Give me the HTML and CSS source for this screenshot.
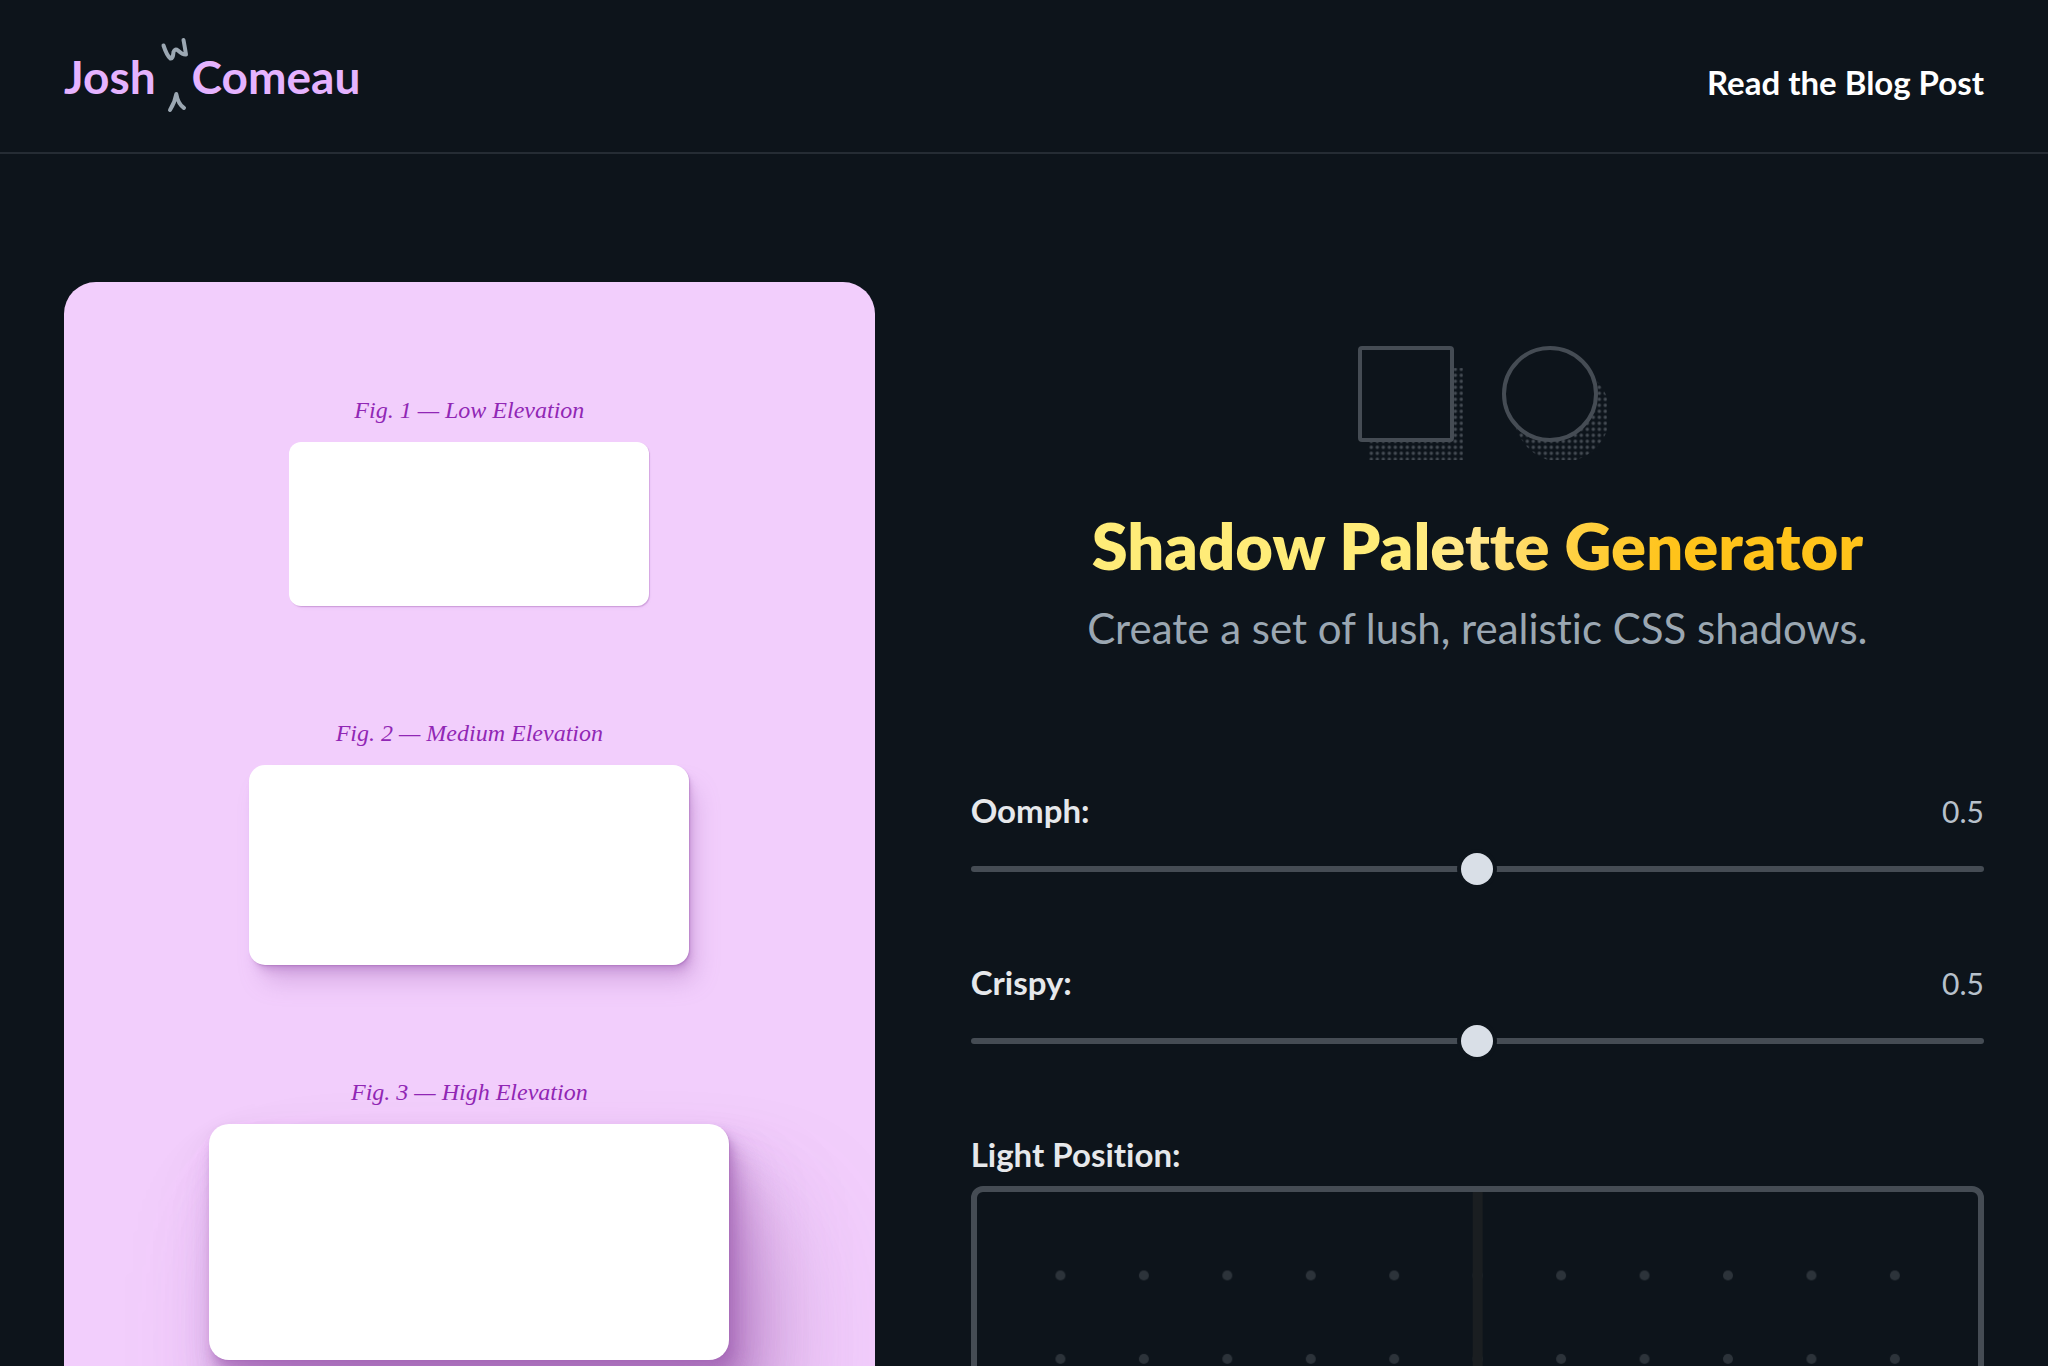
FILE: index.html
```html
<!DOCTYPE html>
<html lang="en">
<head>
<meta charset="utf-8">
<meta name="viewport" content="width=device-width, initial-scale=1">
<title>Shadow Palette Generator</title>
<link rel="stylesheet" href="styles.css">
</head>
<body>
<header class="site-header">
  <a class="logo" href="#" aria-label="Josh W Comeau">
    <span>Josh</span>
    <svg class="logo-initial" viewBox="0 0 36 78" aria-hidden="true">
      <path d="M7.500 9.500Q11 20 14.500 22.500Q17 23 17.500 16Q19 12 22 14.500Q27 19 30 18.500Q29 12 27.500 4"/>
      <path d="M14 74Q19 66 20.300 58Q22 68 28 72"/>
    </svg>
    <span>Comeau</span>
  </a>
  <a class="blog-link" href="#">Read the Blog Post</a>
</header>
<main class="layout">
  <section class="preview" aria-label="Shadow preview">
    <figure class="sample low">
      <figcaption>Fig. 1 — Low Elevation</figcaption>
      <div class="card"></div>
    </figure>
    <figure class="sample medium">
      <figcaption>Fig. 2 — Medium Elevation</figcaption>
      <div class="card"></div>
    </figure>
    <figure class="sample high">
      <figcaption>Fig. 3 — High Elevation</figcaption>
      <div class="card"></div>
    </figure>
  </section>
  <section class="generator">
    <div class="intro">
      <svg class="shapes" viewBox="0 0 260 114" aria-hidden="true">
        <defs>
          <pattern id="halftone" x="-2.700" y="2.300" width="6" height="6" patternUnits="userSpaceOnUse">
            <circle cx="3" cy="3" r="1.700"/>
          </pattern>
        </defs>
        <rect class="dots" x="22" y="22" width="94" height="92"/>
        <circle class="dots" cx="215" cy="68" r="48"/>
        <rect class="shape" x="13" y="2" width="92" height="92" rx="2"/>
        <circle class="shape" cx="203" cy="48" r="46"/>
      </svg>
      <h1>Shadow Palette Generator</h1>
      <p>Create a set of lush, realistic CSS shadows.</p>
    </div>
    <form class="controls">
      <div class="control">
        <div class="control-head">
          <label for="oomph">Oomph:</label>
          <output for="oomph">0.5</output>
        </div>
        <input id="oomph" type="range" min="0" max="1" step="0.01" value="0.5">
      </div>
      <div class="control">
        <div class="control-head">
          <label for="crispy">Crispy:</label>
          <output for="crispy">0.5</output>
        </div>
        <input id="crispy" type="range" min="0" max="1" step="0.01" value="0.5">
      </div>
      <div class="control light" role="group" aria-labelledby="light">
        <div class="control-head"><span id="light">Light Position:</span></div>
        <svg class="light-grid" viewBox="0 0 1002 501" aria-hidden="true">
          <defs>
            <pattern id="grid" x="41.750" y="41.750" width="83.500" height="83.500" patternUnits="userSpaceOnUse">
              <circle cx="41.750" cy="41.750" r="5"/>
            </pattern>
          </defs>
          <rect class="grid-dots" x="42" y="42" width="918" height="417"/>
          <rect class="grid-axis" x="496" width="10" height="501"/>
        </svg>
      </div>
    </form>
  </section>
</main>
</body>
</html>
```
FILE: styles.css
```css
:root {
  --bg: #0d141b;
  --line: #454c54;
  --shadow: 286deg 36% 56%;
}

* { box-sizing: border-box; margin: 0; }

body {
  background: var(--bg);
  color: #e6e8eb;
  font-family: Lato, "Open Sans", sans-serif;
  font-variant-ligatures: none;
}

a { text-decoration: none; }

.site-header {
  display: flex;
  justify-content: space-between;
  align-items: center;
  padding: 36px 64px 34px;
  border-bottom: 2px solid #252c34;
}

.logo {
  display: flex;
  align-items: flex-start;
  color: #e5b3ff;
  font-size: 46px;
  font-weight: 700;
  line-height: 82px;
}

.logo-initial {
  width: 36px;
  height: 78px;
  fill: none;
  stroke: #9ba7b2;
  stroke-width: 4;
  stroke-linecap: round;
  stroke-linejoin: round;
}

.blog-link {
  color: #fff;
  font-size: 33px;
  font-weight: 700;
  line-height: 40px;
  padding-top: 10px;
}

.layout {
  display: grid;
  grid-template-columns: 4fr 5fr;
  gap: 96px;
  padding: 128px 64px;
}

.preview {
  display: flex;
  flex-direction: column;
  align-items: center;
  gap: 111px;
  padding: 112px 32px;
  border-radius: 32px;
  background: #f2cefc;
  overflow: hidden;
}

.sample {
  display: flex;
  flex-direction: column;
  gap: 16px;
  width: 100%;
}

.sample figcaption {
  color: #9127b5;
  font-family: "Liberation Serif", serif;
  font-size: 24px;
  font-style: italic;
  line-height: 32px;
  text-align: center;
}

.card {
  aspect-ratio: 11 / 5;
  background: #fff;
}

.low { max-width: 360px; }
.medium { max-width: 440px; }
.high { max-width: 520px; }

.low .card {
  border-radius: 12px;
  box-shadow:
    1px 1px 1px hsl(var(--shadow) / 0.34),
    1px 2px 2px -2px hsl(var(--shadow) / 0.34),
    2px 4px 5px -5px hsl(var(--shadow) / 0.34);
}

.medium .card {
  border-radius: 16px;
  box-shadow:
    1px 1px 1px hsl(var(--shadow) / 0.36),
    2px 3px 4px -2px hsl(var(--shadow) / 0.36),
    4px 8px 10px -3px hsl(var(--shadow) / 0.36),
    10px 20px 25px -5px hsl(var(--shadow) / 0.36);
}

.high .card {
  border-radius: 20px;
  box-shadow:
    1px 1px 1px hsl(var(--shadow) / 0.34),
    3px 6px 7px hsl(var(--shadow) / 0.34),
    5px 11px 14px -1px hsl(var(--shadow) / 0.34),
    9px 18px 22px -2px hsl(var(--shadow) / 0.34),
    14px 29px 36px -3px hsl(var(--shadow) / 0.34),
    22px 45px 56px -4px hsl(var(--shadow) / 0.34),
    34px 68px 85px -4px hsl(var(--shadow) / 0.34),
    50px 100px 126px -5px hsl(var(--shadow) / 0.34);
}

.generator { padding-top: 64px; }

.intro {
  display: flex;
  flex-direction: column;
  align-items: center;
  text-align: center;
}

.shapes { width: 260px; height: 114px; }
.dots { fill: url(#halftone); }
#halftone circle { fill: var(--line); }
.shape { fill: var(--bg); stroke: var(--line); stroke-width: 4; }

.intro h1 {
  margin-top: 46px;
  background: linear-gradient(100deg, #ffec78 40%, #ffe68c 50%, #ffd34a 60%, #ffc31a 75%);
  background-clip: text;
  color: transparent;
  font-size: 65px;
  font-weight: 800;
  line-height: 78px;
}

.intro p {
  margin-top: 20px;
  color: #9ba7b2;
  font-size: 42px;
  line-height: 48px;
}

.controls {
  display: flex;
  flex-direction: column;
  gap: 74px;
  margin-top: 135px;
}

.control { display: flex; flex-direction: column; gap: 20px; }
.control.light { gap: 9px; }

.control-head {
  display: flex;
  justify-content: space-between;
  align-items: baseline;
  font-size: 33px;
  font-weight: 700;
  line-height: 46px;
}

.control-head output {
  color: #b7c1cb;
  font-size: 30px;
  font-weight: 400;
  line-height: 40px;
}

input[type="range"] {
  appearance: none;
  display: block;
  width: 100%;
  height: 32px;
  margin: 0;
  background: none;
}

input[type="range"]::-webkit-slider-runnable-track {
  height: 6px;
  border-radius: 3px;
  background: var(--line);
}

input[type="range"]::-webkit-slider-thumb {
  appearance: none;
  width: 32px;
  height: 32px;
  margin-top: -13px;
  border-radius: 50%;
  background: #d9dfe7;
  box-shadow: 0 0 0 4px var(--bg);
}

.light-grid {
  width: 100%;
  border: 6px solid var(--line);
  border-radius: 12px;
}

.grid-dots { fill: url(#grid); }
#grid circle { fill: #2c333a; }
.grid-axis { fill: #1a1e21; }
```
